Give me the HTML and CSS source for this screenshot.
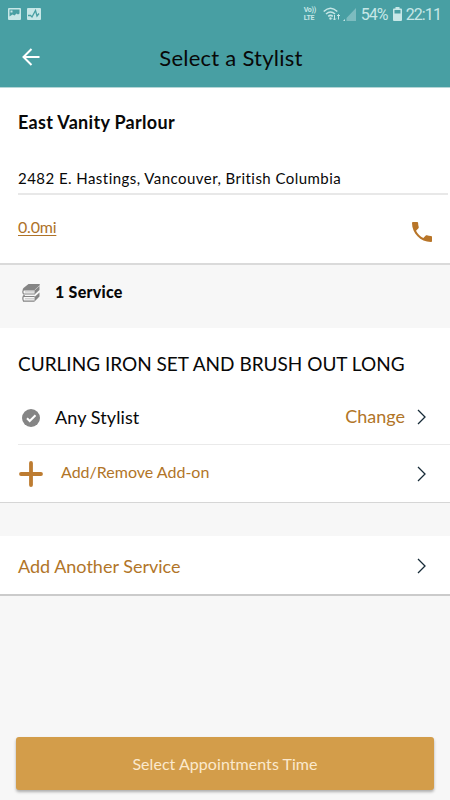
FILE: index.html
```html
<!DOCTYPE html>
<html lang="en">
<head>
    <meta charset="UTF-8">
    <meta name="viewport" content="width=device-width, initial-scale=1.0">
    <title>Select a Stylist</title>
    <link rel="stylesheet" href="styles.css">
</head>
<body>
    <header>
        <div class="status-bar">
            <svg width="13" height="12" viewBox="0 0 13 12"><path fill="#c7e7e7" fill-rule="evenodd" d="M1 0h11q1 0 1 1v10q0 1-1 1H1q-1 0-1-1V1q0-1 1-1zM1.500 1.500v7l3-2 2 1 2-2 1.500 1 1.500-1V1.500z"/><path fill="#c7e7e7" d="M2.500 2.500h2v2h-2z"/></svg>
            <svg class="activity" width="14" height="12" viewBox="0 0 14 12"><rect width="14" height="12" rx="1" fill="#c7e7e7"/><path d="M1 7.500h2.500L5 9l3.500-6.500L10 8l2-2.500" fill="none" stroke="#489fa3" stroke-width="1.300"/></svg>
            <div class="volte"><span>Vo))</span><span>LTE</span></div>
            <svg class="wifi" width="18" height="14" viewBox="0 0 18 14"><g fill="none" stroke="#c7e7e7" stroke-width="1.500"><path d="M.7 4.500q6.800-6.500 13.600 0M3 7q4.500-4 9 0M5.200 9.400q2.300-2 4.600 0"/><path stroke-width="1" d="M11.500 8v5M10 11.500l1.500 1.500 1.500-1.500M15.500 12.500v-5M14 9l1.500-1.500L17 9"/></g><circle cx="7.500" cy="11.500" r="1.200" fill="#c7e7e7"/></svg>
            <svg class="signal" width="13" height="13" viewBox="0 0 13 13"><path fill="#7dbcbf" d="M13 0v13H3.500V10z"/><path fill="#c7e7e7" d="M0 13l2-2v2z"/></svg>
            <span class="battery-text">54%</span>
            <svg class="battery" width="9" height="14" viewBox="0 0 9 14"><path fill="#c7e7e7" fill-rule="evenodd" d="M2.500 0h4v1.500H8q1 0 1 1V13q0 1-1 1H1q-1 0-1-1V2.500q0-1 1-1h1.500zM1.500 3v3.500h6V3z"/></svg>
            <span class="clock">22:11</span>
        </div>
        <div class="nav-bar">
            <svg class="back" width="18" height="18" viewBox="0 0 18 18"><path d="M17.500 9H1.500M9.500 1L1.500 9l8 8" fill="none" stroke="#fff" stroke-width="2"/></svg>
            <h1>Select a Stylist</h1>
        </div>
    </header>

    <section class="salon">
        <h2>East Vanity Parlour</h2>
        <p class="address">2482 E. Hastings, Vancouver, British Columbia</p>
        <div class="contact">
            <a class="distance">0.0mi</a>
            <svg width="20" height="20" viewBox="3 3 18 18"><path fill="#b87528" d="M6.620 10.790c1.440 2.830 3.760 5.140 6.590 6.590l2.200-2.200c.27-.27.67-.36 1.020-.24 1.120.37 2.330.57 3.570.57.55 0 1 .45 1 1V20c0 .55-.45 1-1 1-9.390 0-17-7.610-17-17 0-.55.450-1 1-1h3.500c.55 0 1 .45 1 1 0 1.250.2 2.450.57 3.570.11.35.03.74-.25 1.020z"/></svg>
        </div>
    </section>

    <div class="service-count">
        <svg width="18" height="18" viewBox="0 0 18 18"><path fill="#858585" d="M6.500 0H17q1 0 1 1L12.500 6H.8Q.5 5 1.500 4zM12.500 6.500L17.500 2v4l-5 4.500zM12.500 13L17.500 8.500v4L12.500 17.500z"/><g fill="none" stroke="#858585" stroke-width="1.200"><path d="M12.800 5.800H1.500q-1.300 2 0 4.200h11.300M3 11.800H1.500q-1.300 2.500 0 5.300h11M1.500 12.500h11.200"/></g><g stroke="#b5b5b5" stroke-width=".8"><path d="M3 7.900h9M3 14.800h9"/></g></svg>
        <span>1 Service</span>
    </div>

    <section class="service">
        <h3>CURLING IRON SET AND BRUSH OUT LONG</h3>
        <div class="row stylist">
            <svg class="check" width="18" height="18" viewBox="0 0 18 18"><circle cx="9" cy="9" r="9" fill="#858585"/><path d="M5 9.300l2.700 2.700L13.500 6.300" fill="none" stroke="#fff" stroke-width="2"/></svg>
            <span class="stylist-name">Any Stylist</span>
            <span class="change">Change</span>
            <svg class="chevron" width="9" height="16" viewBox="0 0 9 16"><path d="M1 1l7 7-7 7"/></svg>
        </div>
        <div class="row addon">
            <svg class="plus" width="24" height="26" viewBox="0 0 24 26"><path d="M12 2v22M2 13h20" stroke="#bd7c31" stroke-width="3.800" stroke-linecap="round"/></svg>
            <span class="addon-text">Add/Remove Add-on</span>
            <svg class="chevron" width="9" height="16" viewBox="0 0 9 16"><path d="M1 1l7 7-7 7"/></svg>
        </div>
    </section>

    <section class="another">
        <span class="another-text">Add Another Service</span>
        <svg class="chevron" width="9" height="16" viewBox="0 0 9 16"><path d="M1 1l7 7-7 7"/></svg>
    </section>

    <button class="select-time">Select Appointments Time</button>
</body>
</html>
```
FILE: styles.css
```css
* {
    box-sizing: border-box;
}
body {
    margin: 0;
    height: 800px;
    display: flex;
    flex-direction: column;
    overflow: hidden;
    background-color: #f7f7f7;
    color: #080808;
    font-family: Lato, "Open Sans", sans-serif;
    font-variant-ligatures: none;
}
h1, h2, h3, p {
    margin: 0;
    font-weight: 400;
    white-space: nowrap;
}
svg {
    flex-shrink: 0;
    display: block;
}
header {
    height: 88px;
    background-color: #489fa3;
    border-bottom: 1px solid #b5d6d7;
}
.status-bar {
    display: flex;
    align-items: center;
    height: 28px;
    padding: 0 9px 0 8px;
    color: #c7e7e7;
    font-family: Roboto, sans-serif;
    font-size: 16px;
}
.activity {
    margin-left: 6px;
}
.volte {
    display: flex;
    flex-direction: column;
    width: 13px;
    margin-left: auto;
    font-size: 7px;
    line-height: 8px;
    font-weight: 700;
    letter-spacing: -0.2px;
}
.wifi {
    margin-left: 6px;
}
.signal {
    margin-left: 2px;
}
.battery-text {
    margin-left: 5px;
    letter-spacing: -0.9px;
}
.battery {
    margin: 0 4px 0 5px;
}
.clock {
    letter-spacing: -0.9px;
}
.nav-bar {
    position: relative;
    display: flex;
    align-items: center;
    justify-content: center;
    height: 59px;
}
.nav-bar h1 {
    font-size: 22px;
    letter-spacing: 0.25px;
    padding: 0 0 1px 12px;
}
.back {
    position: absolute;
    left: 22px;
    top: 20px;
}
.salon {
    height: 177px;
    padding-left: 18px;
    background-color: #fff;
    border-bottom: 2px solid #dadada;
}
.salon h2 {
    height: 70px;
    line-height: 69px;
    font-size: 18px;
    font-weight: 700;
    letter-spacing: 0.3px;
}
.address {
    height: 37px;
    margin-right: 2px;
    line-height: 40px;
    font-size: 15px;
    letter-spacing: 0.45px;
    border-bottom: 2px solid #e8e8e8;
}
.contact {
    display: flex;
    align-items: center;
    justify-content: space-between;
    height: 68px;
    padding-right: 18px;
}
.contact svg {
    margin-top: 5px;
}
.distance {
    margin-bottom: 5px;
    color: #ae7228;
    font-size: 16px;
    letter-spacing: -0.2px;
    text-decoration: underline;
    text-underline-offset: 2px;
}
.service-count {
    display: flex;
    align-items: center;
    gap: 15px;
    height: 63px;
    padding: 0 22px 8px;
    font-size: 16px;
    font-weight: 900;
    letter-spacing: 0.25px;
}
.service-count span {
    margin-bottom: 2px;
}
.service {
    height: 175px;
    padding-left: 18px;
    background-color: #fff;
    border-bottom: 1px solid #d6d6d6;
}
.service h3 {
    height: 62px;
    line-height: 72px;
    font-size: 19px;
}
.row {
    display: flex;
    align-items: center;
    padding-right: 24px;
}
.stylist {
    height: 55px;
    border-bottom: 1px solid #eaeaea;
}
.check {
    margin: 2px 15px 0 4px;
}
.stylist-name {
    font-size: 18px;
    letter-spacing: 0.1px;
}
.change {
    margin: 0 0 2px auto;
    font-size: 18px;
    color: #b17528;
}
.chevron {
    margin-left: auto;
    fill: none;
    stroke: #172b38;
    stroke-width: 1.3;
}
.change + .chevron {
    margin-left: 12px;
}
.addon {
    height: 57px;
}
.plus {
    margin: 0 18px 0 1px;
}
.addon-text {
    margin-bottom: 4px;
    font-size: 16px;
    color: #b17528;
}
.another {
    display: flex;
    align-items: center;
    height: 60px;
    margin-top: 33px;
    padding: 2px 24px 0 18px;
    background-color: #fff;
    border-bottom: 2px solid #cbcbcb;
}
.another-text {
    font-size: 18px;
    color: #b17528;
}
.select-time {
    height: 53px;
    margin: auto 16px 10px;
    padding: 0;
    border: 0;
    border-radius: 3px;
    background-color: #d39d4a;
    box-shadow: 0 2px 3px rgba(0, 0, 0, 0.3);
    color: #fbe9cd;
    font-family: inherit;
    font-size: 16px;
    letter-spacing: 0.05px;
}
```
